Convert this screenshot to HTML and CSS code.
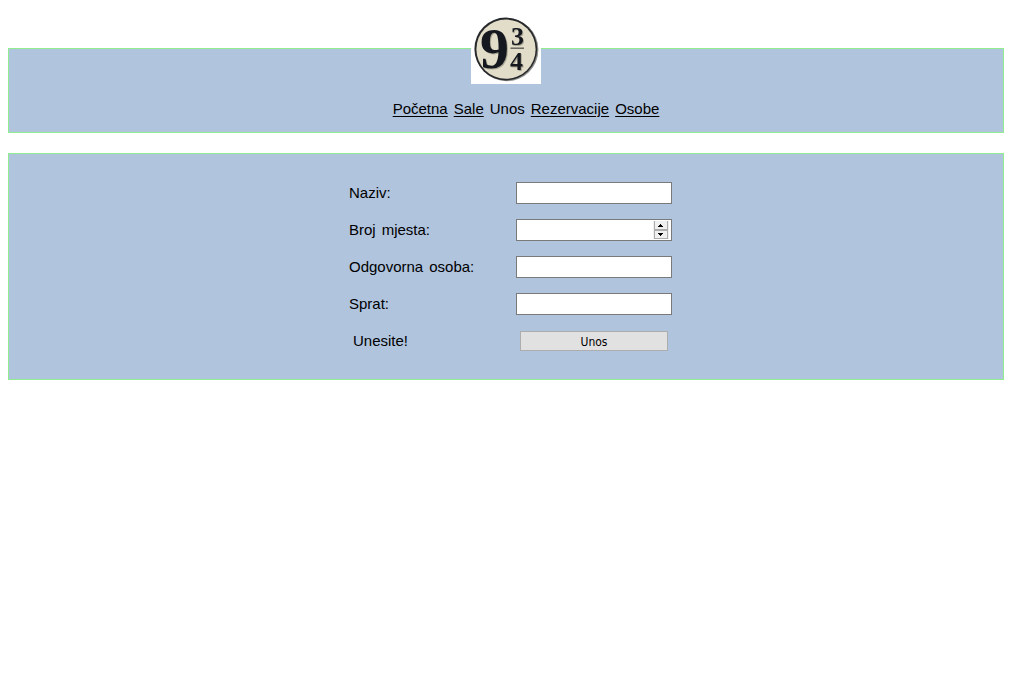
FILE: index.html
```html
<!DOCTYPE html>
<html lang="bs">
<head>
<meta charset="utf-8">
<title>Unos</title>
<link rel="stylesheet" href="styles.css">
</head>
<body>
<header class="panel header">
  <svg class="logo" viewBox="0 0 70 70" role="img" aria-label="9 3/4">
    <rect width="70" height="70" fill="#fff"/>
    <circle cx="35.8" cy="35.6" r="31.6" fill="#8d8d8a"/>
    <circle cx="34.8" cy="35" r="31.4" fill="#26282b"/>
    <circle cx="35" cy="35.2" r="29.6" fill="#e2ddc9"/>
    <g class="digits">
      <text class="nine" x="9" y="54">9</text>
      <text class="part" x="40" y="31">3</text>
      <text class="part" x="39" y="56">4</text>
    </g>
    <path d="M39.5 34.2H53" stroke="#5c5c55" stroke-width="1.4"/>
  </svg>
  <nav class="menu">
    <a href="#pocetna">Početna</a>
    <a href="#sale">Sale</a>
    <span>Unos</span>
    <a href="#rezervacije">Rezervacije</a>
    <a href="#osobe">Osobe</a>
  </nav>
</header>
<main class="panel content">
  <form class="form">
    <label class="label" for="naziv">Naziv:</label>
    <input class="field" id="naziv" type="text">
    <label class="label" for="broj"><span>Broj</span> <span>mjesta:</span></label>
    <div class="number">
      <input class="field" id="broj" type="number">
      <div class="spinner">
        <button class="step" type="button" aria-label="+"><svg class="arrow" viewBox="0 0 5 3" shape-rendering="crispEdges"><path d="M2 0h1v1h1v1h1v1H0V2h1V1h1z"/></svg></button>
        <button class="step" type="button" aria-label="-"><svg class="arrow" viewBox="0 0 5 3" shape-rendering="crispEdges"><path d="M0 0h5v1H4v1H3v1H2V2H1V1H0z"/></svg></button>
      </div>
    </div>
    <label class="label" for="osoba"><span>Odgovorna</span> <span>osoba:</span></label>
    <input class="field" id="osoba" type="text">
    <label class="label" for="sprat">Sprat:</label>
    <input class="field" id="sprat" type="text">
    <label class="label inset" for="unos">Unesite!</label>
    <button class="submit inset" id="unos" type="submit">Unos</button>
  </form>
</main>
</body>
</html>
```

FILE: styles.css
```css
body {
  margin: 0;
  padding: 48px 8px 8px;
  font: 15px/18px Arial, "Liberation Sans", sans-serif;
  color: #000;
  background: #fff;
}

.panel {
  display: flex;
  flex-direction: column;
  align-items: center;
  background: lightsteelblue;
  border: 1px solid lightgreen;
}

.header {
  margin-bottom: 20px;
  padding-bottom: 14px;
}

.logo {
  display: block;
  width: 70px;
  height: 70px;
  margin-top: -35px;
}

.digits {
  font-family: "Liberation Serif", serif;
  font-weight: bold;
  fill: #15181f;
  filter: drop-shadow(1px 1px 0 #a9a593);
}

.nine {
  font-size: 58px;
}

.part {
  font-size: 26px;
}

.menu {
  display: flex;
  gap: 6px;
  margin: 16px 0 0 40px;
}

.menu a {
  color: inherit;
  text-decoration: underline;
  text-underline-offset: 2px;
}

.content {
  padding: 28px 0 27px;
}

.form {
  display: grid;
  grid-template-columns: 167px 156px;
  grid-auto-rows: 22px;
  row-gap: 15px;
  align-items: center;
  margin-left: 9px;
}

.label {
  display: flex;
  gap: 6px;
}

.field {
  box-sizing: border-box;
  width: 100%;
  height: 22px;
  padding: 1px 3px;
  border: 1px solid #7a7a7a;
  border-radius: 0;
  background: #fff;
  appearance: textfield;
}

.field::-webkit-inner-spin-button {
  appearance: none;
}

.number {
  display: flex;
  position: relative;
}

.spinner {
  position: absolute;
  top: 2px;
  right: 3px;
  display: grid;
  grid-template-rows: 10px 8px;
  width: 16px;
  padding: 0 1px;
  box-sizing: border-box;
  background: #f0f0f0;
}

.step {
  display: flex;
  align-items: center;
  justify-content: center;
  min-width: 0;
  padding: 0 1px 0 0;
  border: 1px solid #adadad;
  border-top: 0;
  background: #f0f0f0;
}

.step:first-child {
  padding-top: 1px;
  border-bottom-width: 2px;
}

.arrow {
  width: 5px;
  height: 3px;
}

.inset {
  margin: 0 4px;
}

.submit {
  height: 20px;
  padding: 1px 0 0;
  border: 1px solid #adadad;
  background: #e1e1e1;
  color: #000;
  font: 12px "DejaVu Sans Condensed", "Noto Sans", sans-serif;
}
```
